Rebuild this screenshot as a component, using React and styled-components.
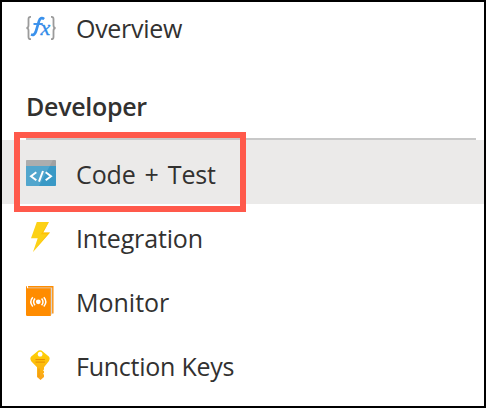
import React from "react";
import styled, { createGlobalStyle } from "styled-components";

const GlobalStyle = createGlobalStyle`
  * { box-sizing: border-box; }
  body { margin: 0; background: #fff; }
`;

const Panel = styled.main`
  position: relative;
  width: 486px;
  height: 408px;
  overflow: hidden;
  border: 2px solid #000;
  background: #fff;
  color: #323130;
  font-family: "Open Sans", "Noto Sans", sans-serif;
`;

const Item = styled.a`
  display: flex;
  align-items: center;
  height: ${(p) => (p.$first ? 58 : 64)}px;
  padding-left: 24px;
  background: ${(p) => (p.$selected ? "#ebeae9" : "transparent")};
`;

const Icon = styled.svg`
  flex: none;
  width: 30px;
  height: 30px;
  margin: ${(p) => p.$top || 0}px 20px 0 0;
`;

const Label = styled.span`
  font-size: 25px;
  line-height: 34px;
  letter-spacing: ${(p) => p.$spacing || 0}px;
  word-spacing: ${(p) => p.$words || 0}px;
  margin-top: ${(p) => (p.$top === undefined ? 3 : p.$top)}px;
  white-space: nowrap;
`;

const Heading = styled.h2`
  height: 80px;
  margin: 0 8px 0 24px;
  padding-top: 29px;
  border-bottom: 2px solid #c8c8c8;
  font-size: 25px;
  line-height: 34px;
  font-weight: 600;
  letter-spacing: ${(p) => p.$spacing}px;
`;

const Highlight = styled.div`
  position: absolute;
  left: 12px;
  top: 130px;
  width: 232px;
  height: 80px;
  border: 6px solid #ff594b;
`;

const IconText = styled.text`
  font-family: "Liberation Serif", serif;
  font-style: italic;
  fill: #2f8ae8;
  stroke: #2f8ae8;
  stroke-width: 0.3px;
`;

function FunctionIcon() {
  return (
    <Icon viewBox="0 0 30 30" $top={-6}>
      <path d="M5 3.8H4.5Q2.5 3.8 2.5 6v6.2Q2.5 15 .4 15q2.1 0 2.1 2.8V24q0 2.2 2 2.2H5M25 3.8h.5q2 0 2 2.2v6.2q0 2.8 2.1 2.8-2.1 0-2.1 2.8V24q0 2.2-2 2.2H25" fill="none" stroke="#9b9b9b" strokeWidth="1.8" />
      <path d="M18.2 6Q14.5 3.5 13 8.2L9.8 18.8Q8.4 22.8 5 21.5" fill="none" stroke="#3a91ec" strokeWidth="2.7" />
      <path d="M7.5 11h9.3" stroke="#3a91ec" strokeWidth="1.9" />
      <IconText x="14.6" y="22.4" fontSize="22">x</IconText>
    </Icon>
  );
}

function CodeIcon() {
  return (
    <Icon viewBox="0 0 30 30" $top={5}>
      <path d="M.8 0H29.2q.8 0 .8.8V6H0V.8Q0 0 .8 0z" fill="#a0a1a2" />
      <path d="M0 6h30v19.2q0 .8-.8.8H.8Q0 26 0 25.2z" fill="#3999c6" />
      <path d="M0 .8Q0 0 .8 0H27L13 26H.8Q0 26 0 25.2z" fill="#fff" opacity=".13" />
      <path d="M10.3 12.2l-5.3 4 5.3 4M19.7 12.2l5.3 4-5.3 4M17 11l-4 10.6" fill="none" stroke="#fff" strokeWidth="2" />
    </Icon>
  );
}

function BoltIcon() {
  return (
    <Icon viewBox="0 0 30 30" $top={2}>
      <path d="M10.8 0H23l-5.8 10.5H24L7 30l4.7-13.7H5z" fill="#fcd116" />
      <path d="M22.8 0l-8 12.3h6.5L7 30l17-19.5h-6.8z" fill="#ffb900" opacity=".65" />
    </Icon>
  );
}

function MonitorIcon() {
  return (
    <Icon viewBox="0 0 30 30" $top={2}>
      <path d="M2 0h25.5v27.5H5z" fill="#ff8c00" />
      <path d="M2 1.4h24.2V28L24 29.5 2 29z" fill="#d8d4cf" />
      <path d="M0 1.2Q0 0 1 0v2.3h23.8V30H1.2Q0 30 0 28.8z" fill="#ff8c00" />
      <circle cx="12.3" cy="15.8" r="2.4" fill="#fff" />
      <path d="M9 12.4q-2.8 3.4 0 6.8M6.8 11.2q-4 4.6 0 9.2M15.6 12.4q2.8 3.4 0 6.8M17.8 11.2q4 4.6 0 9.2" fill="none" stroke="#fff" strokeWidth="1.5" />
    </Icon>
  );
}

function KeyIcon() {
  return (
    <Icon viewBox="0 0 30 30" $top={2}>
      <defs>
        <linearGradient id="keyFill" x2="0" y2="1">
          <stop stopColor="#ffd400" />
          <stop offset="1" stopColor="#faa21d" />
        </linearGradient>
      </defs>
      <path fillRule="evenodd" d="M12.5.5Q14 0 15.5.5L22.8 6.5Q24.5 8.4 22.8 11.2L18 17.2v2.3l-1 .8 1 1v1.5l-1 .9 1 1v2.2L14.5 30 11 27V17.2L5.2 11.2Q3.5 8.4 5.2 6.5zM14.1 1.8a2.4 2.4 0 1 0 .01 0z" fill="url(#keyFill)" />
      <path d="M9.5 9.6h9.4M9.5 12.1h9.4" fill="none" stroke="#e58b00" strokeWidth="1" />
      <path d="M13 18.5v8.5" stroke="#e58b00" strokeWidth="1" opacity=".6" />
    </Icon>
  );
}

export default function App() {
  return (
    <>
      <GlobalStyle />
      <Panel>
        <Item $first>
          <FunctionIcon />
          <Label $top={-6} $spacing={-0.3}>Overview</Label>
        </Item>
        <Heading $spacing={-0.3}>Developer</Heading>
        <Item $selected>
          <CodeIcon />
          <Label $words={2.6} $spacing={-0.12}>Code + Test</Label>
        </Item>
        <Item>
          <BoltIcon />
          <Label $spacing={-0.15}>Integration</Label>
        </Item>
        <Item>
          <MonitorIcon />
          <Label>Monitor</Label>
        </Item>
        <Item>
          <KeyIcon />
          <Label $spacing={-0.24}>Function Keys</Label>
        </Item>
        <Highlight />
      </Panel>
    </>
  );
}
